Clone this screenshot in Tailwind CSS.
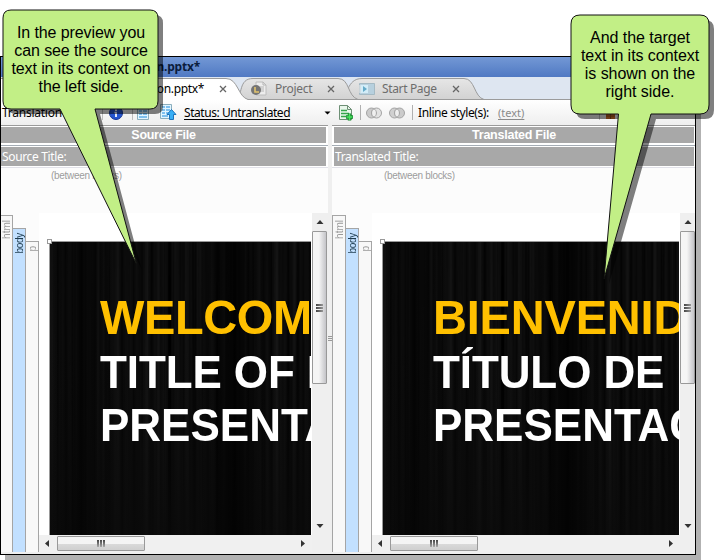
<!DOCTYPE html>
<html lang="en">
<head>
<meta charset="utf-8">
<title>Translation preview</title>
<script src="https://cdn.jsdelivr.net/npm/@tailwindcss/browser@4"></script>
</head>
<body class="bg-white">
<div class="relative w-[724px] h-[560px] overflow-hidden bg-white font-['Noto_Sans','Open_Sans',sans-serif] text-[12px] text-black">

  <!-- window shadow -->
  <div class="absolute left-[5px] top-[61px] w-[696px] h-[499px] bg-[#b2b2b2]"></div>

  <main class="relative mt-[56px] w-[696px] h-[499px] border border-black bg-[#efefef] flex flex-col overflow-hidden">
    <!-- title bar -->
    <header class="h-[20px] shrink-0 bg-linear-to-b from-[#7398d5] to-[#5079c3] flex items-center">
      <div class="w-[199px] text-right font-bold text-[12px] leading-[20px] tracking-[-0.2px] text-[#0b1c3c] whitespace-nowrap">Presentation.pptx*</div>
    </header>

    <!-- document tabs -->
    <nav class="relative h-[23px] shrink-0 bg-[#dee6f1]">
      <svg class="absolute left-0 top-0" width="694" height="23" viewBox="1 77 694 23">
        <defs><linearGradient id="tab" x1="0" y1="0" x2="0" y2="1"><stop offset="0" stop-color="#e6e6e6"/><stop offset="1" stop-color="#d2d2d2"/></linearGradient></defs>
        <path d="M341 99.5C348 98 346 78.500 362 78.500H464C475 78.500 474 97 484 99.500Z" fill="url(#tab)" stroke="#9b9b9b"/>
        <path d="M236 99.500C243 96 238 78.500 253 78.500H338C350 78.500 347 96 358 99.500Z" fill="url(#tab)" stroke="#9b9b9b"/>
        <path d="M0 99.500H695" stroke="#9b9b9b"/>
        <path d="M0 101V78.500H226C238 78.500 238 97 248 99.500V101Z" fill="#fff"/>
        <path d="M0 78.500H226C238 78.500 238 97 248 99.500" fill="none" stroke="#9b9b9b"/>
      </svg>
      <div class="relative h-full flex items-center text-[#6d6d6d] leading-[23px]">
        <div class="w-[203px] text-right text-black tracking-[-0.35px]">Presentation.pptx*</div>
        <svg class="ml-[15px]" width="8" height="8" viewBox="0 0 8 8"><path d="M1 1l6 6M7 1l-6 6" stroke="#666" stroke-width="1.3"/></svg>
        <svg class="ml-[23px]" width="18" height="16" viewBox="0 0 18 16"><path d="M6 1h7l3 3v10H6z" fill="#ededed" stroke="#bcbcbc"/><path d="M13 1v3h3M10 6h4M10 8h4M10 10h4" fill="none" stroke="#b5b5b5"/><circle cx="6" cy="9" r="5" fill="#757575"/><path d="M5 6v5h4" fill="none" stroke="#e2c46d" stroke-width="1.600"/></svg>
        <div class="ml-[7px] w-[52px] tracking-[-0.25px]">Project</div>
        <svg width="8" height="8" viewBox="0 0 8 8"><path d="M1 1l6 6M7 1l-6 6" stroke="#666" stroke-width="1.3"/></svg>
        <svg class="ml-[24px]" width="16" height="14" viewBox="0 0 16 14"><path d="M.5 1.500h15v11H.5z" fill="#b7d0de" stroke="#a5bac4"/><path d="M2 3h7v8H2z" fill="#d3edf8"/><path d="M4 4v6l4-3z" fill="#65abc9"/><path d="M1 3v8" stroke="#eee"/></svg>
        <div class="ml-[7px] w-[70px] tracking-[-0.35px]">Start Page</div>
        <svg width="8" height="8" viewBox="0 0 8 8"><path d="M1 1l6 6M7 1l-6 6" stroke="#666" stroke-width="1.3"/></svg>
      </div>
    </nav>

    <!-- toolbar -->
    <div class="h-[25px] shrink-0 bg-linear-to-b from-white to-[#eeeeee] flex items-center leading-[24px] whitespace-nowrap">
      <div class="ml-[1px] w-[100px] tracking-[-0.25px]">Translation</div>
      <div class="w-px h-[15px] bg-[#bdbdbd]"></div>
      <svg class="ml-[6px]" width="14" height="14" viewBox="0 0 14 14"><circle cx="7" cy="7" r="6.500" fill="#2454cf" stroke="#153494"/><path d="M7 3v2M5.500 6.500H7V11" fill="none" stroke="#fff" stroke-width="1.700"/></svg>
      <div class="ml-[9px] w-px h-[15px] bg-[#bdbdbd]"></div>
      <svg class="ml-[4px]" width="14" height="16" viewBox="0 0 14 16"><path d="M.5.5h11v14H.5z" fill="#e1f5ff" stroke="#8baebd"/><path d="M2 3h3M6 3h4M2 6h3M6 6h4M2 9h3M6 9h4M2 12h8" stroke="#5eaeea" stroke-width="1.700"/></svg>
      <svg class="ml-[9px]" width="17" height="17" viewBox="0 0 17 17"><path d="M.5.500h11v14H.5z" fill="#e1f5ff" stroke="#8baebd"/><path d="M2 3h3M6 3h4M2 6h3M6 6h4M2 9h3M6 9h4M2 12h6" stroke="#5eaeea" stroke-width="1.700"/><path d="M11.500 5.500l4.500 5h-2.500v5h-4v-5H7z" fill="#37aef5" stroke="#1c73bb"/></svg>
      <div class="ml-[7px] w-[140px] underline underline-offset-2 tracking-[-0.44px]">Status: Untranslated</div>
      <svg width="7" height="4" viewBox="0 0 7 4"><path d="M.5.500h6l-3 3z"/></svg>
      <svg class="ml-[8px]" width="15" height="16" viewBox="0 0 15 16"><path d="M.5.500h8l4 4v10H.5z" fill="#eaf7ec" stroke="#6e9076"/><path d="M8.500.5v4h4" fill="none" stroke="#6e9076"/><path d="M2 5.500h6M2 8.500h8M2 11.500h5" stroke="#35a64c" stroke-width="1.600"/><path d="M10.500 8.500v7M7 12h7" stroke="#12852a" stroke-width="3.400"/><path d="M10.500 9v6M7.500 12h6" stroke="#4be361" stroke-width="1.700"/></svg>
      <div class="ml-[6px] w-px h-[15px] bg-[#b0b0b0]"></div>
      <svg class="ml-[5px]" width="16" height="12" viewBox="0 0 16 12"><g stroke="#a3a3a3"><circle cx="5.500" cy="6" r="5" fill="#cbcbcb"/><circle cx="10.500" cy="6" r="5" fill="#e2e2e2"/><path d="M8 1.700a5 5 0 0 1 0 8.600a5 5 0 0 1 0-8.600z" fill="#efefef"/></g></svg>
      <svg class="ml-[7px]" width="16" height="12" viewBox="0 0 16 12"><g stroke="#a3a3a3"><circle cx="5.500" cy="6" r="5" fill="#d0d0d0"/><circle cx="10.500" cy="6" r="5" fill="#cbcbcb"/><path d="M8 1.700a5 5 0 0 1 0 8.600a5 5 0 0 1 0-8.600z" fill="#eee"/></g></svg>
      <div class="ml-[7px] w-px h-[15px] bg-[#b0b0b0]"></div>
      <div class="ml-[5px] w-[80px] tracking-[-0.4px]">Inline style(s):</div>
      <div class="text-[11px] underline text-[#8b8b8b] tracking-[0px] underline-offset-2">(text)</div>
      <div class="ml-[75px] w-px h-[15px] bg-[#bdbdbd]"></div>
      <svg class="ml-[5px]" width="12" height="13" viewBox="0 0 12 13"><path d="M1 1h9v12H1z" fill="#d8742a"/><path d="M1 6h9M1 10h9M5.500 1v12" stroke="#8e4a18"/></svg>
    </div>

    <div class="flex h-[427px] shrink-0">
      <!-- source pane -->
      <section class="w-[327px] shrink-0 h-full flex flex-col bg-[#fcfcfc] overflow-hidden">
        <h2 class="h-[20px] shrink-0 border-t border-[#9a9a9a] bg-white pt-[1px] pr-[2px]"><div class="h-[16px] bg-[#a8a8a8] text-white text-center font-bold leading-[16px] font-['Liberation_Sans',sans-serif] text-[12.500px] tracking-[-0.28px]">Source File</div></h2>
        <div class="h-[23px] shrink-0 border-t border-[#a5adb5] border-b border-b-[#e1e1e8] bg-white pt-[1px] pr-[2px]"><div class="h-[19px] bg-[#a8a8a8] text-white leading-[19px] pl-[1px] tracking-[-0.35px]">Source Title:</div></div>
        <div class="h-[45px] shrink-0 pl-[50px] text-[#9d9d9d] font-['Liberation_Sans',sans-serif] text-[10px] leading-[15px] tracking-[-0.3px]">(between blocks)</div>
        <div class="flex h-[339px]">
          <div class="w-[38px] shrink-0 flex text-[#999] font-['Liberation_Sans',sans-serif] text-[10px] leading-[11px]">
            <div class="mt-[2px] w-[12px] border-t border-r border-[#a5a5a5] bg-[#f8f8f8] flex justify-center pt-[4px]"><span class="[writing-mode:vertical-rl] rotate-180 self-start leading-[11px]">html</span></div>
            <div class="mt-[15px] w-[13px] border-t border-r border-[#a5a5a5] bg-[#c2e0ff] text-[#1d3b4e] flex justify-center pt-[4px]"><span class="[writing-mode:vertical-rl] rotate-180 self-start leading-[11px] tracking-[-0.3px]">body</span></div>
            <div class="mt-[28px] w-[13px] border-t border-r border-[#a5a5a5] bg-[#f8f8f8] flex justify-center pt-[4px]"><span class="[writing-mode:vertical-rl] rotate-180 self-start leading-[11px]">p</span></div>
          </div>
          <div class="w-[273px] shrink-0 bg-white">
            <div class="relative h-[322px] pt-[28px] pl-[10px] pr-[1px]">
              <div class="relative h-[294px] border-t border-l border-[#999] overflow-hidden bg-[#0a0a0a] font-['Liberation_Sans',sans-serif] font-bold whitespace-nowrap text-white pl-[50px] pt-[47px]">
                <svg class="absolute left-0 top-0" width="300" height="293" viewBox="0 0 300 293">
                  <defs>
                    <filter id="streaks" x="0" y="0" width="100%" height="100%" color-interpolation-filters="sRGB"><feTurbulence type="fractalNoise" baseFrequency="0.17 0.0008" numOctaves="3" seed="7"/><feColorMatrix values="0.14 0 0 0 -0.028  0.14 0 0 0 -0.028  0.14 0 0 0 -0.028  0 0 0 0 1"/></filter>
                    <linearGradient id="fade" x1="0" y1="0" x2="0" y2="1"><stop offset=".35" stop-color="#0a0a0a" stop-opacity="0"/><stop offset="1" stop-color="#0a0a0a" stop-opacity=".75"/></linearGradient>
                    <linearGradient id="shade"><stop offset="0" stop-opacity="0"/><stop offset=".1" stop-opacity=".4"/><stop offset=".22" stop-opacity="0"/><stop offset=".5" stop-opacity="0"/><stop offset=".61" stop-opacity=".7"/><stop offset=".72" stop-opacity="0"/></linearGradient>
                  </defs>
                  <rect width="300" height="293" filter="url(#streaks)"/><rect width="300" height="293" fill="url(#fade)"/><rect width="300" height="293" fill="url(#shade)"/>
                </svg>
                <div class="relative scale-y-[1.04] text-[47px] leading-[55px] tracking-[-0.4px] text-[#ffc000]">WELCOME</div>
                <div class="relative scale-y-[1.04] text-[44px] leading-[53px] tracking-[-0.1px] pt-px">TITLE OF PRE</div>
                <div class="relative scale-y-[1.04] text-[44px] leading-[53px]">PRESENTATION</div>
              </div>
              <div class="absolute left-[8px] top-[26px] size-[5px] border border-[#999] bg-white"></div>
            </div>
            <div class="h-[17px] bg-[#f0f0f0] flex items-center pl-[6px]">
              <svg width="4" height="7" viewBox="0 0 4 7"><path d="M4 0v7L0 3.500z" fill="#333"/></svg>
              <div class="ml-[8px] w-[88px] h-[15px] border border-[#999] rounded-[1px] bg-linear-to-b from-[#f4f4f4] from-50% via-[#dadada] via-50% to-[#cfcfcf] flex items-center justify-center gap-[1px]"><i class="w-[2px] h-[7px] bg-linear-to-b from-[#444] to-[#aaa]"></i><i class="w-[2px] h-[7px] bg-linear-to-b from-[#444] to-[#aaa]"></i><i class="w-[2px] h-[7px] bg-linear-to-b from-[#444] to-[#aaa]"></i></div>
              <svg class="ml-auto mr-[7px]" width="4" height="7" viewBox="0 0 4 7"><path d="M0 0v7L4 3.500z" fill="#333"/></svg>
            </div>
          </div>
          <div class="w-[16px] bg-[#efefef]">
            <div class="h-[322px] w-[15px] flex flex-col items-center">
              <svg class="mt-[7px]" width="8" height="4" viewBox="0 0 8 4"><path d="M.5 4h7L4 0z" fill="#333"/></svg>
              <div class="mt-[7px] w-[15px] h-[153px] border border-[#999] rounded-[1px] bg-linear-to-r from-[#f5f5f5] from-45% to-[#c4c4c8] flex flex-col items-center justify-center gap-[1px]"><i class="h-[2px] w-[7px] bg-linear-to-r from-[#444] to-[#999]"></i><i class="h-[2px] w-[7px] bg-linear-to-r from-[#444] to-[#999]"></i><i class="h-[2px] w-[7px] bg-linear-to-r from-[#444] to-[#999]"></i></div>
              <svg class="mt-auto mb-[7px]" width="8" height="4" viewBox="0 0 8 4"><path d="M.5 0h7L4 4z" fill="#333"/></svg>
            </div>
          </div>
        </div>
      </section>

      <div class="w-[4px] shrink-0 h-full bg-[#efefef] flex flex-col items-center justify-center gap-[1px]"><i class="w-[4px] h-px bg-[#999]"></i><i class="w-[4px] h-px bg-[#999]"></i><i class="w-[4px] h-px bg-[#999]"></i></div>

      <!-- target pane -->
      <section class="w-[363px] shrink-0 h-full flex flex-col bg-[#fcfcfc] overflow-hidden">
        <h2 class="h-[20px] shrink-0 border-t border-[#9a9a9a] bg-white pt-[1px] pr-[1px] pl-[2px]"><div class="h-[16px] bg-[#a8a8a8] text-white text-center font-bold leading-[16px] font-['Liberation_Sans',sans-serif] text-[12.500px] tracking-[-0.25px]">Translated File</div></h2>
        <div class="h-[23px] shrink-0 border-t border-[#a5adb5] border-b border-b-[#e1e1e8] bg-white pt-[1px] pr-[1px] pl-[2px]"><div class="h-[19px] bg-[#a8a8a8] text-white leading-[19px] pl-[1px] tracking-[-0.35px]">Translated Title:</div></div>
        <div class="h-[45px] shrink-0 pl-[52px] text-[#9d9d9d] font-['Liberation_Sans',sans-serif] text-[10px] leading-[15px] tracking-[-0.3px]">(between blocks)</div>
        <div class="flex h-[339px]">
          <div class="w-[40px] shrink-0 flex text-[#999] font-['Liberation_Sans',sans-serif] text-[10px] leading-[11px]">
            <div class="mt-[2px] w-[14px] border-t border-x border-[#a5a5a5] bg-[#f8f8f8] flex justify-center pt-[4px]"><span class="[writing-mode:vertical-rl] rotate-180 self-start leading-[11px]">html</span></div>
            <div class="mt-[15px] w-[13px] border-t border-r border-[#a5a5a5] bg-[#c2e0ff] text-[#1d3b4e] flex justify-center pt-[4px]"><span class="[writing-mode:vertical-rl] rotate-180 self-start leading-[11px] tracking-[-0.3px]">body</span></div>
            <div class="mt-[28px] w-[13px] border-t border-r border-[#a5a5a5] bg-[#f8f8f8] flex justify-center pt-[4px]"><span class="[writing-mode:vertical-rl] rotate-180 self-start leading-[11px]">p</span></div>
          </div>
          <div class="w-[308px] shrink-0 bg-white">
            <div class="relative h-[322px] pt-[28px] pl-[10px] pr-[1px]">
              <div class="relative h-[294px] border-t border-l border-[#999] overflow-hidden bg-[#0a0a0a] font-['Liberation_Sans',sans-serif] font-bold whitespace-nowrap text-white pl-[50px] pt-[47px]">
                <svg class="absolute left-0 top-0" width="300" height="293" viewBox="0 0 300 293">
                  <rect width="300" height="293" filter="url(#streaks)"/><rect width="300" height="293" fill="url(#fade)"/><rect width="300" height="293" fill="url(#shade)"/>
                </svg>
                <div class="relative scale-y-[1.04] text-[47px] leading-[55px] tracking-[-0.2px] text-[#ffc000]">BIENVENIDO</div>
                <div class="relative scale-y-[1.04] text-[44px] leading-[53px] tracking-[-0.1px] pt-px">TÍTULO DE LA</div>
                <div class="relative scale-y-[1.04] text-[44px] leading-[53px]">PRESENTACIÓN</div>
              </div>
              <div class="absolute left-[8px] top-[26px] size-[5px] border border-[#999] bg-white"></div>
            </div>
            <div class="h-[17px] bg-[#f0f0f0] flex items-center pl-[6px]">
              <svg width="4" height="7" viewBox="0 0 4 7"><path d="M4 0v7L0 3.500z" fill="#333"/></svg>
              <div class="ml-[8px] w-[88px] h-[15px] border border-[#999] rounded-[1px] bg-linear-to-b from-[#f4f4f4] from-50% via-[#dadada] via-50% to-[#cfcfcf] flex items-center justify-center gap-[1px]"><i class="w-[2px] h-[7px] bg-linear-to-b from-[#444] to-[#aaa]"></i><i class="w-[2px] h-[7px] bg-linear-to-b from-[#444] to-[#aaa]"></i><i class="w-[2px] h-[7px] bg-linear-to-b from-[#444] to-[#aaa]"></i></div>
              <svg class="ml-auto mr-[7px]" width="4" height="7" viewBox="0 0 4 7"><path d="M0 0v7L4 3.500z" fill="#333"/></svg>
            </div>
          </div>
          <div class="w-[15px] bg-[#efefef]">
            <div class="h-[322px] flex flex-col items-center">
              <svg class="mt-[7px]" width="8" height="4" viewBox="0 0 8 4"><path d="M.5 4h7L4 0z" fill="#333"/></svg>
              <div class="mt-[7px] w-[15px] h-[153px] border border-[#999] rounded-[1px] bg-linear-to-r from-[#f5f5f5] from-45% to-[#c4c4c8] flex flex-col items-center justify-center gap-[1px]"><i class="h-[2px] w-[7px] bg-linear-to-r from-[#444] to-[#999]"></i><i class="h-[2px] w-[7px] bg-linear-to-r from-[#444] to-[#999]"></i><i class="h-[2px] w-[7px] bg-linear-to-r from-[#444] to-[#999]"></i></div>
              <svg class="mt-auto mb-[7px]" width="8" height="4" viewBox="0 0 8 4"><path d="M.5 0h7L4 4z" fill="#333"/></svg>
            </div>
          </div>
        </div>
      </section>
    </div>
  </main>

  <!-- callouts -->
  <svg class="absolute left-0 top-0" width="724" height="560" viewBox="0 0 724 560">
    <defs>
      <path id="c1" d="M11 10H150Q158 10 158 18V101Q158 109 150 109H95L136.500 264L60 109H11Q3 109 3 101V18Q3 10 11 10Z"/>
      <path id="c2" d="M580 15H700Q709 15 709 24V105Q709 114 700 114H651L604 279L618.500 114H580Q571 114 571 105V24Q571 15 580 15Z"/>
    </defs>
    <g fill="#000" fill-opacity=".5"><use href="#c1" x="5" y="5"/><use href="#c2" x="5" y="5"/></g>
    <g fill="#c2ef86" stroke="#111"><use href="#c1"/><use href="#c2"/></g>
  </svg>
  <div class="absolute left-[3px] top-[24px] w-[156px] text-center font-['Liberation_Sans',sans-serif] text-[16px] leading-[18px] tracking-[-0.1px] whitespace-nowrap">In the preview you<br>can see the source<br>text in its context on<br>the left side.</div>
  <div class="absolute left-[571px] top-[29px] w-[138px] text-center font-['Liberation_Sans',sans-serif] text-[16px] leading-[18px] tracking-[-0.05px] whitespace-nowrap">And the target<br>text in its context<br>is shown on the<br>right side.</div>
</div>
</body>
</html>
